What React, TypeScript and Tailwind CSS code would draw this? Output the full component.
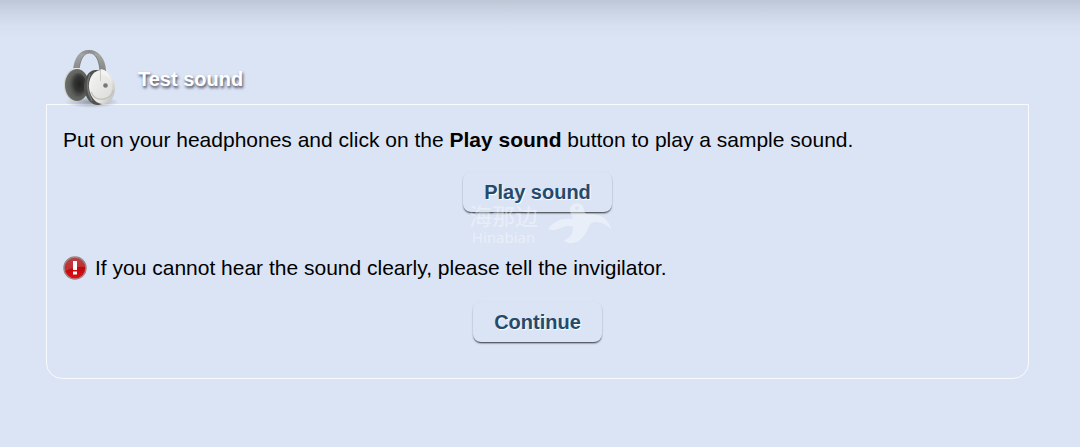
import type { ReactNode } from "react";

interface SoundButtonProps {
  children: ReactNode;
}

const SoundButton = ({ children }: SoundButtonProps) => (
  <button
    type="button"
    className="h-10 rounded-lg px-[21px] text-[20px] leading-6 font-bold text-[#264a6a] [text-shadow:1px_1px_1px_#fff] shadow-[0_2px_2px_-1px_rgba(0,0,0,0.7),0_1px_2px_rgba(0,0,0,0.2)]"
  >
    {children}
  </button>
);

const HeadphonesIcon = () => (
  <svg viewBox="0 0 56 62" className="h-[62px] w-14 shrink-0" aria-hidden="true">
    <defs>
      <linearGradient id="band" x1="0" y1="0" x2="0" y2="1">
        <stop offset="0" stopColor="#858786" />
        <stop offset="0.2" stopColor="#a3a5a5" />
        <stop offset="1" stopColor="#808282" />
      </linearGradient>
      <radialGradient id="cushion" cx="0.58" cy="0.52" r="0.55">
        <stop offset="0" stopColor="#1f201f" />
        <stop offset="0.4" stopColor="#353634" />
        <stop offset="0.65" stopColor="#5c5e5b" />
        <stop offset="1" stopColor="#6b6d6a" />
      </radialGradient>
      <radialGradient id="hollow" cx="0.6" cy="0.5" r="0.55">
        <stop offset="0" stopColor="#222322" />
        <stop offset="0.6" stopColor="#333432" />
        <stop offset="1" stopColor="#555754" />
      </radialGradient>
      <linearGradient id="shell" x1="0" y1="0" x2="1" y2="1">
        <stop offset="0" stopColor="#f7f7f5" />
        <stop offset="0.6" stopColor="#e6e6e3" />
        <stop offset="1" stopColor="#b4b5b1" />
      </linearGradient>
      <linearGradient id="plate" x1="0" y1="0" x2="1" y2="1">
        <stop offset="0" stopColor="#f2f2f0" />
        <stop offset="1" stopColor="#dcdcd9" />
      </linearGradient>
      <radialGradient id="floor">
        <stop offset="0" stopColor="#56606d" stopOpacity="0.6" />
        <stop offset="1" stopColor="#56606d" stopOpacity="0" />
      </radialGradient>
    </defs>
    <ellipse cx="30" cy="56" rx="27" ry="6" fill="url(#floor)" />
    <path
      d="M11 25C12 11 18 4 27 4c9.500 0 16.500 8 17 21l-6 2C37.500 14 33.500 7 27.500 7S18 14 17 25Z"
      fill="url(#band)"
    />
    <path d="M17 24C18 14 21.500 7 27.500 7S37.500 14 38 26" fill="none" stroke="#747675" strokeWidth="0.800" />
    <ellipse cx="13" cy="39" rx="11" ry="16.500" fill="#d0d2cf" />
    <path d="M9 25l3-3 6 0 2 4Z" fill="#e6e7e4" />
    <ellipse cx="15" cy="39" rx="12" ry="16" fill="url(#cushion)" />
    <ellipse cx="16" cy="38" rx="8" ry="11" fill="url(#hollow)" />
    <ellipse cx="35" cy="41.500" rx="13" ry="17.500" fill="#50524f" transform="rotate(-6 35 41.500)" />
    <path d="M28 28Q22 41 30 55" fill="none" stroke="#747773" strokeWidth="1.500" />
    <ellipse cx="40" cy="41" rx="13" ry="17" fill="url(#shell)" transform="rotate(-8 40 41)" />
    <path d="M38.500 23l4 1q5 5 7 13l-11-1Z" fill="#f3f3f1" />
    <ellipse cx="39.500" cy="41" rx="10.500" ry="12.500" fill="url(#plate)" />
    <path d="M29 46Q33 55 42 53T51 44" fill="none" stroke="#c3c4c0" strokeWidth="1.500" />
    <path d="M38.500 24v11" stroke="#c9cac7" strokeWidth="1" />
    <circle cx="43.500" cy="39.500" r="2.300" fill="#757874" />
  </svg>
);

const WarningIcon = () => (
  <svg viewBox="0 0 24 24" className="size-6 shrink-0" aria-hidden="true">
    <defs>
      <linearGradient id="alert" x1="0" y1="0" x2="0" y2="1">
        <stop offset="0" stopColor="#a81f27" />
        <stop offset="0.5" stopColor="#b90a0e" />
        <stop offset="1" stopColor="#ee0b10" />
      </linearGradient>
    </defs>
    <circle cx="12" cy="12" r="11" fill="url(#alert)" stroke="#9c8587" strokeWidth="1.500" />
    <path d="M2 12a10 10 0 0 1 20-1Q14 10 2 15Z" fill="#fff" opacity="0.15" />
    <path d="M10 5h4v9h-4Z" fill="#fff" />
    <rect x="10" y="15.500" width="4" height="3" fill="#fff" />
  </svg>
);

const Watermark = () => (
  <div className="pointer-events-none absolute top-[31px] left-1/2 flex w-[144px] -translate-x-[70px] gap-2 text-white/40">
    <div className="w-[72px] shrink-0 text-center">
      <div className="font-['Noto_Sans_CJK_SC',sans-serif] text-[23px] leading-6 whitespace-nowrap">海那边</div>
      <div className="pt-0.5 font-['Noto_Sans',sans-serif] text-[15px] leading-4">Hinabian</div>
    </div>
    <svg viewBox="0 0 64 42" className="h-[42px] w-16 shrink-0" aria-hidden="true">
      <path
        d="M0 26C6 18 14 15 25 16c0-3-3-5-3-9 0-8 11-9 13-3 1 3 1 6 4 7 13-1 22 5 24 15-7-7-16-9-21-5-2 5-4 10-8 14-5 6-15 7-18 2 6-2 9-6 9-13-5-2-8-1-12 1-5 2-9 3-13 1Z"
        fill="currentColor"
      />
      <circle cx="29" cy="5" r="2" fill="#dbe4f5" />
    </svg>
  </div>
);

const App = () => {
  return (
    <div className="min-h-screen bg-[#dbe4f5] bg-[linear-gradient(to_bottom,#bec7d6_0px,#cbd4e4_12px,#d7e0f1_26px,#dbe4f5_40px)] pt-[46px] pr-[51px] pb-10 pl-[46px] font-['Liberation_Sans',Arial,sans-serif] text-black">
      <header className="relative -mb-1 flex items-center gap-5 pl-4">
        <HeadphonesIcon />
        <h1 className="pt-1 text-[20px] leading-6 font-bold text-white [text-shadow:1px_2px_3px_#445]">
          Test sound
        </h1>
      </header>

      <main className="rounded-b-[16px] border border-white/80 px-4 pt-[23px] pb-9 text-[21px] leading-6">
        <p>
          Put on your headphones and click on the <strong>Play sound</strong> button to play a sample sound.
        </p>
        <div className="relative mt-5 flex justify-center">
          <SoundButton>Play sound</SoundButton>
          <Watermark />
        </div>
        <p className="mt-11 flex items-center gap-2">
          <WarningIcon />
          If you cannot hear the sound clearly, please tell the invigilator.
        </p>
        <div className="mt-[22px] flex justify-center">
          <SoundButton>Continue</SoundButton>
        </div>
      </main>
    </div>
  );
};

export default App;
